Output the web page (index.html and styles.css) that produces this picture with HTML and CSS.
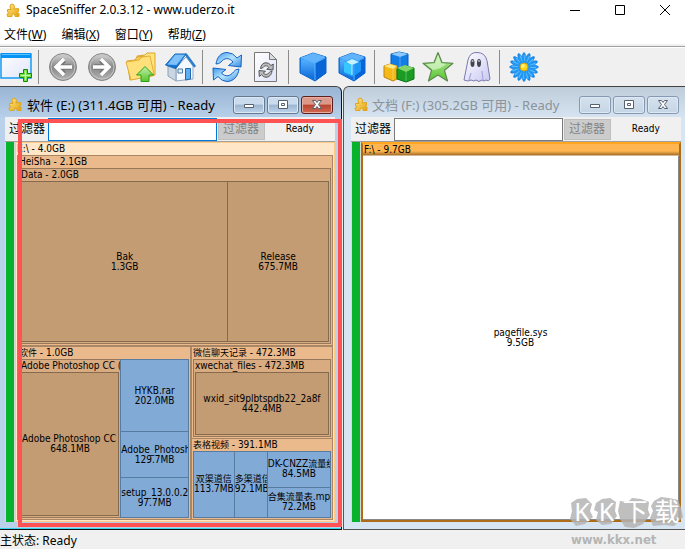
FILE: index.html
```html
<!DOCTYPE html>
<html lang="zh-CN">
<head>
<meta charset="utf-8">
<title>SpaceSniffer 2.0.3.12 - www.uderzo.it</title>
<link rel="stylesheet" href="styles.css">
</head>
<body>
<svg class="defs" aria-hidden="true">
  <defs>
    <linearGradient id="gold" x1="0" y1="0" x2="1" y2="1"><stop offset="0" stop-color="#ffe88a"/><stop offset="1" stop-color="#e5a20c"/></linearGradient>
    <linearGradient id="blue" x1="0" y1="0" x2="0" y2="1"><stop offset="0" stop-color="#58b2ff"/><stop offset="1" stop-color="#0866d6"/></linearGradient>
    <linearGradient id="sky" x1="0" y1="0" x2="1" y2="1"><stop offset="0" stop-color="#3f98ea"/><stop offset=".5" stop-color="#b5e4ff"/><stop offset="1" stop-color="#3289e2"/></linearGradient>
    <linearGradient id="grey" x1="0" y1="0" x2="0" y2="1"><stop offset="0" stop-color="#d6d6d6"/><stop offset=".5" stop-color="#888"/><stop offset="1" stop-color="#b4b4b4"/></linearGradient>
    <linearGradient id="green" x1="0" y1="0" x2="0" y2="1"><stop offset="0" stop-color="#c3efac"/><stop offset="1" stop-color="#57c42d"/></linearGradient>
    <linearGradient id="ghost" x1="0" y1="0" x2="1" y2="1"><stop offset="0" stop-color="#fff"/><stop offset="1" stop-color="#c9c8f2"/></linearGradient>
    <linearGradient id="pane" x1="0" y1="0" x2="1" y2="1"><stop offset="0" stop-color="#fff"/><stop offset="1" stop-color="#dfe4fa"/></linearGradient>
    <symbol id="puzzle" viewBox="0 0 14 15"><path d="M1.500 6.500H5L4 4q0-3 2-3t2.500 2.500L8 6l4.500-.5v3q-2 .5-1.500 2l2-.5v3.500H9q.5-2.500-1.500-2.500T6 13.500H1.500L1 11q2 0 2-1.200T1.500 9z" fill="url(#gold)" stroke="#e0a51c"/></symbol>
    <symbol id="cycle" viewBox="0 0 32 32"><path d="M5 13C6 6 10 1.500 16 1.500q6 0 10 5.500l4.500-3L30 16l-12.500-1.500L22 11c-4-5-9-4-12 0q-2 2-5 2z"/><path d="M28 18c-1 8-6 12.500-12 12.500q-5 0-9-5L2.500 29 2 17l13 1.500L10.500 22c4 4.500 9 3 12-1q2-3 5.500-3z"/></symbol>
    <symbol id="cube" viewBox="0 0 32 32"><path d="M16 2 29 6v16L18 30 3 22V7z" fill="#1680ef" stroke="#0b64c8"/><path d="M16 2 29 6 18 12 3 7z" fill="#61b4fc"/><path d="m18 12 11-6v16l-11 8z" fill="#0964d6"/><path d="m4 8 14 4v17L4 22z" fill="url(#blue)"/><path d="M4 7l14 5 10-5M18 12v17" fill="none" stroke="#5ab3ff"/></symbol>
    <ellipse id="petal" cx="16" cy="16" rx="2.800" ry="14.500"/>
  </defs>
</svg>
<div class="app">
  <header class="titlebar">
    <svg class="logo"><use href="#puzzle"/></svg>
    <h1>SpaceSniffer 2.0.3.12 - www.uderzo.it</h1>
    <div class="sysbuttons">
      <button aria-label="最小化"><svg viewBox="0 0 10 10"><path d="M0 5.500h10"/></svg></button>
      <button aria-label="最大化"><svg viewBox="0 0 10 10"><path d="M.5.5h9v9h-9z"/></svg></button>
      <button aria-label="关闭"><svg viewBox="0 0 10 10"><path d="m0 0 10 10M10 0 0 10"/></svg></button>
    </div>
  </header>
  <nav class="menubar">
    <button>文件(<u>W</u>)</button><button>编辑(<u>X</u>)</button><button>窗口(<u>Y</u>)</button><button>帮助(<u>Z</u>)</button>
  </nav>
  <div class="toolbar">
    <button class="first" aria-label="新建"><svg viewBox="0 0 32 32"><path d="M1 3h30v24H1z" fill="url(#pane)" stroke="#169af4" stroke-width="1.500"/><path d="M1 2h30v5H1z" fill="#0793f5"/><path d="M2 3.500h28" stroke="#58c4ff"/><path d="M23.500 18.500h4v4h4v4h-4v4h-4v-4h-4v-4h4z" fill="#75df50" stroke="#168a08"/><path d="M25.500 20v9M21 24.500h9" stroke="#c0ffa0"/></svg></button>
    <i class="sep"></i>
    <button aria-label="后退"><svg viewBox="0 0 32 32"><circle cx="16" cy="16" r="13.500" fill="url(#grey)" stroke="#858585"/><circle cx="16" cy="16" r="12" fill="none" stroke="#c5c5c5"/><path d="M24 16H10m7-7-7 7 7 7" fill="none" stroke="#777" stroke-width="5.500"/><path d="M25 16H9m8-8-8 8 8 8" fill="none" stroke="#fff" stroke-width="3.500"/></svg></button>
    <button aria-label="前进"><svg viewBox="0 0 32 32"><circle cx="16" cy="16" r="13.500" fill="url(#grey)" stroke="#858585"/><circle cx="16" cy="16" r="12" fill="none" stroke="#c5c5c5"/><path d="M8 16h14m-7-7 7 7-7 7" fill="none" stroke="#777" stroke-width="5.500"/><path d="M7 16h16m-8-8 8 8-8 8" fill="none" stroke="#fff" stroke-width="3.500"/></svg></button>
    <button aria-label="上一级"><svg viewBox="0 0 32 32"><path d="m12 5 8-1 2-2h8v22l-13 4z" fill="#ffe47e" stroke="#dda52a"/><path d="m2 10 8-1 2-3 7-1v21L5 29z" fill="url(#gold)" stroke="#d7a02b"/><path d="m1 11 13-2 3-3 8-1 4 18-3 2-20 4z" fill="#ffe07a" stroke="#e3ae36"/><path d="M20 15.500 28.500 24H24v6.500h-8V24h-4.500z" fill="url(#green)" stroke="#2ca111"/></svg></button>
    <button aria-label="主页"><svg viewBox="0 0 32 32"><path d="m12 17 10-11 7 9v13l-17 2z" fill="#f4f9ff" stroke="#8fa8c2"/><path d="m4 15 8 3v12l-8-5z" fill="#c9d6e3" stroke="#8fa2b5"/><path d="M22 3.500 30.500 15" stroke="#2b7fce" stroke-width="2.500" stroke-linecap="round"/><path d="M1.500 14 11 3h11L12 17.500z" fill="url(#blue)" stroke="#1469b2" stroke-linejoin="round"/><path d="M3.500 13.500 11.500 4H20l-7.500 10z" fill="#7fc2fa"/><path d="M21.500 17.500h5V28l-5 1z" fill="#5aaef6" stroke="#2569aa"/><path d="M14 18h4.500v4H14z" fill="#d4f2ff" stroke="#517a9d"/></svg></button>
    <i class="sep"></i>
    <button aria-label="刷新"><svg viewBox="0 0 32 32"><use href="#cycle" class="cycle-blue"/></svg></button>
    <button aria-label="刷新页面"><svg viewBox="0 0 32 32"><path d="M4.500 1.500h15l7 7v22h-22z" fill="url(#pane)" stroke="#777"/><path d="M19.500 1.500v7h7z" fill="#ddd" stroke="#777"/><use href="#cycle" x="8" y="11" width="16" height="16" class="cycle-grey"/></svg></button>
    <i class="sep"></i>
    <button aria-label="立方体"><svg><use href="#cube"/></svg></button>
    <button aria-label="透明立方体"><svg viewBox="0 0 32 32"><use href="#cube"/><path d="m16 7 9 4v9l-8 6-9-4V11z" fill="#23a4ff" opacity=".8"/><path d="m8 11 8 3v10l-8-3z" fill="#36c7ff"/><path d="m16 8 7 3-7 3-6-3z" fill="#c5f2ff"/><path d="M16 14v10" stroke="#b4efff"/></svg></button>
    <i class="sep"></i>
    <button aria-label="文件类型"><svg viewBox="0 0 32 32"><path d="m8 3 8-2 9 2v12l-8 3-9-3z" fill="#127ce7" stroke="#075bbb"/><path d="m8 3 8-2 9 2-8 3z" fill="#8fcaff"/><path d="m1 15 6-2 7 2v13l-4 2-9-4z" fill="#f5b817" stroke="#bd8510"/><path d="m1 15 6-2 7 2-4 3z" fill="#ffe987"/><path d="m14 18 8-3 9 2v11l-8 3-9-3z" fill="#1b9d25" stroke="#087411"/><path d="m14 17 8-3 9 3-8 4z" fill="#82d46a"/><path d="M23 21v9M17 6v11M10 18v11" stroke="#fff" opacity=".3"/></svg></button>
    <button aria-label="标记"><svg viewBox="0 0 32 32"><path d="m16 1.500 4 10 11 .8-8.500 7 3 10.700L16 24l-9.500 6 3-10.700-8.500-7 11-.8z" fill="url(#green)" stroke="#5e8850" stroke-width="1.200" stroke-linejoin="round"/><path d="m16 4-3 8.500-9 .8 7 5.700q8-1 13-6l-5-.6z" fill="#e2f8d5" opacity=".65"/></svg></button>
    <button aria-label="幽灵"><svg viewBox="0 0 32 32"><path d="M3 29 7 9Q9 1 16 1.500q8 0 10 8L29 28q-1 3-4 1-2 2-4 0-3 3-6 0-2 2-5 0-3 2-7 0z" fill="url(#ghost)" stroke="#7b78ad"/><path d="M10 22 8 29M21 20l1 9" stroke="#aaa7de" stroke-width="1.200"/><ellipse cx="11.500" cy="12" rx="2" ry="4" fill="#45444d"/><ellipse cx="18" cy="12" rx="2" ry="4" fill="#45444d"/><circle cx="11.500" cy="10" r="1" fill="#bbb"/><circle cx="18" cy="10" r="1" fill="#bbb"/></svg></button>
    <i class="sep"></i>
    <button aria-label="关于"><svg viewBox="0 0 32 32"><g fill="#1e97f5" stroke="#0b74d8" stroke-width=".6"><use href="#petal"/><use href="#petal" transform="rotate(22.500 16 16)"/><use href="#petal" transform="rotate(45 16 16)"/><use href="#petal" transform="rotate(67.500 16 16)"/><use href="#petal" transform="rotate(90 16 16)"/><use href="#petal" transform="rotate(112.500 16 16)"/><use href="#petal" transform="rotate(135 16 16)"/><use href="#petal" transform="rotate(157.500 16 16)"/></g><circle cx="16" cy="16" r="11" fill="#2397f2"/><circle cx="16" cy="16" r="9" fill="none" stroke="#5bbcff" stroke-width="6" stroke-dasharray="1 2.530"/><circle cx="16" cy="16" r="4" fill="#ffd414" stroke="#c7a022"/><circle cx="15" cy="15" r="2" fill="#fff06c"/></svg></button>
  </div>

  <main class="workspace">
    <section class="window active">
      <header class="caption">
        <svg class="logo"><use href="#puzzle"/></svg>
        <h2>软件 (E:) (311.4GB 可用) - Ready</h2>
        <div class="controls">
          <button aria-label="最小化"><svg viewBox="0 0 12 12"><path d="M1.500 5.500h9v3h-9z"/></svg></button>
          <button aria-label="还原"><svg viewBox="0 0 12 12"><path d="M1.500 1.500h9v8h-9zM4.500 4.500h3v2h-3z"/></svg></button>
          <button class="close" aria-label="关闭"><svg viewBox="0 0 12 12"><path d="M1.500 1.500h3L6 3.500l1.500-2h3l-3 4 3 4h-3L6 7.500l-1.500 2h-3l3-4z"/></svg></button>
        </div>
      </header>
      <form class="filter">
        <label for="filter-e">过滤器</label><input id="filter-e" type="text"><button type="button" disabled>过滤器</button><output>Ready</output>
      </form>
      <div class="view">
        <div class="gauge"></div>
        <div class="node root">
          <div class="name">E:\ - 4.0GB</div>
          <div class="rows root-body">
            <div class="node level1 heisha">
              <div class="name">HeiSha - 2.1GB</div>
              <div class="node level2 fill inset">
                <div class="name">Data - 2.0GB</div>
                <div class="cols fill inset">
                  <div class="tile dir bak"><div>Bak</div><div>1.3GB</div></div>
                  <div class="tile dir release"><div>Release</div><div>675.7MB</div></div>
                </div>
              </div>
            </div>
            <div class="cols lower">
              <div class="node level1 software">
                <div class="name"><span class="han">软件</span> - 1.0GB</div>
                <div class="cols fill inset">
                  <div class="node level2 adobe">
                    <div class="name">Adobe Photoshop CC (6</div>
                    <div class="rows fill inset"><div class="tile dir fill"><div>Adobe Photoshop CC (</div><div>648.1MB</div></div></div>
                  </div>
                  <div class="rows files">
                    <div class="tile file hykb"><div>HYKB.rar</div><div>202.0MB</div></div>
                    <div class="tile file photo"><div>Adobe_Photosh</div><div>129.7MB</div></div>
                    <div class="tile file setup"><div>setup_13.0.0.20</div><div>97.7MB</div></div>
                  </div>
                </div>
              </div>
              <div class="rows right">
                <div class="node level1 chat">
                  <div class="name"><span class="han">微信聊天记录</span> - 472.3MB</div>
                  <div class="node level2 fill inset">
                    <div class="name">xwechat_files - 472.3MB</div>
                    <div class="rows fill inset"><div class="tile dir fill"><div>wxid_sit9plbtspdb22_2a8f</div><div>442.4MB</div></div></div>
                  </div>
                </div>
                <div class="node level1 video">
                  <div class="name"><span class="han">表格视频</span> - 391.1MB</div>
                  <div class="cols fill inset">
                    <div class="tile file dual"><div class="han">双渠道信</div><div>113.7MB</div></div>
                    <div class="tile file multi"><div class="han">多渠道信</div><div>92.1MB</div></div>
                    <div class="rows flow">
                      <div class="tile file dk"><div>DK-CNZZ<span class="han">流量统</span></div><div>84.5MB</div></div>
                      <div class="tile file total"><div><span class="han">合集流量表</span>.mp4</div><div>72.2MB</div></div>
                    </div>
                  </div>
                </div>
              </div>
            </div>
          </div>
        </div>
      </div>
      <div class="marker"></div>
    </section>

    <section class="window inactive">
      <header class="caption">
        <svg class="logo"><use href="#puzzle"/></svg>
        <h2>文档 (F:) (305.2GB 可用) - Ready</h2>
        <div class="controls">
          <button aria-label="最小化"><svg viewBox="0 0 12 12"><path d="M1.500 5.500h9v3h-9z"/></svg></button>
          <button aria-label="还原"><svg viewBox="0 0 12 12"><path d="M1.500 1.500h9v8h-9zM4.500 4.500h3v2h-3z"/></svg></button>
          <button aria-label="关闭"><svg viewBox="0 0 12 12"><path d="M1.500 1.500h3L6 3.500l1.500-2h3l-3 4 3 4h-3L6 7.500l-1.500 2h-3l3-4z"/></svg></button>
        </div>
      </header>
      <form class="filter">
        <label for="filter-f">过滤器</label><input id="filter-f" type="text"><button type="button" disabled>过滤器</button><output>Ready</output>
      </form>
      <div class="view">
        <div class="gauge"></div>
        <div class="node drive">
          <div class="name">F:\ - 9.7GB</div>
          <div class="tile page fill"><div>pagefile.sys</div><div>9.5GB</div></div>
        </div>
      </div>
    </section>
  </main>
  <footer class="status">主状态: Ready</footer>
  <div class="watermark">
    <div class="brand">
      <svg viewBox="0 0 116 32" preserveAspectRatio="none"><path d="m3 7 6-4 9-1 6 6-2 7 3 6-8 7-9 2-6-7 2-8zM28 7l6-4 8-1 6 4-1 9 2 5-6 8-9 1-6-5 2-8-4-2zM52 5l8 1 4-4 9 1 8 3-1 8 2 5-7 9-9 4-9-1-5-8-2-8zM86 5l7-4 8 1 9 2 3 8 2 9-4 4-5 5-10-1-11 1-3-8 3-7-2-5z"/></svg>
      <strong><span>K</span><span>K</span><span>下</span><span>载</span></strong>
    </div>
    <span class="site">www.kkx.net</span>
  </div>
</div>
</body>
</html>
```
FILE: styles.css
```css
* { box-sizing: border-box; }
body { margin: 0; background: #f0f0f0; color: #000; font: 12px/18px "Noto Sans", "Noto Sans CJK SC", sans-serif; }
button { margin: 0; padding: 0; border: 0; background: none; font: inherit; color: inherit; }
h1, h2 { margin: 0; font-size: 12px; font-weight: 400; white-space: nowrap; }
h2 { font-size: 13px; }
.defs { position: absolute; width: 0; height: 0; }
.app { position: relative; display: flex; flex-direction: column; min-height: 100vh; }
.logo { flex: none; width: 14px; height: 15px; }

.titlebar { display: flex; align-items: center; gap: 6px; height: 24px; padding: 0 0 4px 6px; background: #fff; }
.sysbuttons { display: flex; margin-left: auto; }
.sysbuttons button { display: grid; place-items: center; width: 45px; height: 20px; }
.sysbuttons button:last-child { width: 40px; margin-left: 3px; }
.sysbuttons svg { width: 10px; height: 10px; overflow: visible; fill: none; stroke: #000; }
.menubar { display: flex; gap: 15px; height: 22px; padding: 2px 4px 0; border-bottom: 2px solid #f0f0f0; background: #fff; }

.toolbar { display: flex; align-items: center; height: 40px; border-top: 1px solid #a0a0a0; box-shadow: inset 0 1px #fff; }
.toolbar button { display: grid; place-items: center; width: 39px; height: 38px; }
.toolbar .first { width: 35px; place-items: center start; }
.toolbar svg { width: 32px; height: 32px; }
.sep { width: 5px; height: 34px; margin-left: 3px; border-left: 1px solid #8b8b8b; }
.cycle-blue { fill: url(#sky); stroke: #1463c4; }
.cycle-grey { fill: #bbb; stroke: #555; stroke-width: 2; }

.workspace { display: grid; grid-template-columns: 1fr 1fr; gap: 1px; flex: 1; min-height: 442px; background: #f0f0f0; }
.window { position: relative; display: flex; flex-direction: column; min-width: 0; border-top: 1px solid #444; }
.active { padding: 0 6px 7px 5px; border-right: 1px solid #111; border-bottom: 1px solid #111; border-radius: 0 6px 0 0; background: linear-gradient(#98b4d4, #b9d1ea 32px); box-shadow: inset 0 -1px #39d5ef; }
.inactive { padding: 0 4px 7px 7px; border-left: 1px solid #555; border-bottom: 1px solid #555; border-radius: 6px 0 0 0; background: linear-gradient(#bfcddb, #d7e4f2 32px); color: #8b939b; }
.caption { display: flex; align-items: center; gap: 5px; height: 30px; padding: 5px 0 0 3px; }
.inactive .caption { gap: 4px; }
.controls { display: flex; gap: 2px; margin: 0 2px 0 auto; }
.controls button { display: grid; place-items: center; width: 32px; height: 18px; border: 1px solid #66798f; border-radius: 3px; background: linear-gradient(#c9dbed 45%, #9db5cf 50%, #bcd4eb); box-shadow: inset 0 0 0 1px #dce9f5; }
.inactive .controls button { border-color: #8798b2; background: linear-gradient(#d6e1ed, #c5d5e5); }
.controls .close { border-color: #5c2020; background: linear-gradient(#dc9889 45%, #b94330 50%, #cf6b50); box-shadow: inset 0 0 0 1px #e7ad9e; }
.controls svg { width: 12px; height: 12px; fill: #fff; stroke: #56616f; }

.filter { display: flex; align-items: center; height: 25px; margin: 0; border-bottom: 1px solid #a0a0a0; background: #f0f0f0; color: #000; }
.filter label { width: 43px; padding-left: 4px; white-space: nowrap; }
.filter input { flex: 168 1 0; min-width: 0; height: 23px; padding: 0; border: 1px solid #0078d7; background: #fff; }
.inactive .filter input { border-color: #7a7a7a; }
.filter button { flex: none; width: 47px; height: 21px; margin-left: 1px; border: 1px solid #bfbfbf; background: #ccc; color: #838383; line-height: 18px; }
.filter output { flex: 71 1 0; text-align: center; font: 10px/14px "DejaVu Sans Condensed", sans-serif; }

.view { display: flex; flex: 1; gap: 1px; padding-left: 1px; background: #d8d8d8; color: #000; font: 10px/10px "DejaVu Sans Condensed", "Noto Sans CJK SC", sans-serif; }
.gauge { width: 8px; background: #08b22c; }
.rows, .cols { display: flex; min-width: 0; min-height: 0; }
.rows, .node { flex-direction: column; }
.node { display: flex; min-width: 0; min-height: 0; overflow: hidden; }
.name { flex: none; height: 12px; padding-left: 1px; overflow: hidden; line-height: 12px; white-space: nowrap; }
.han { font-size: 9px; }
.fill { flex: 1 1 0; }
.inset { margin: 0 1px 1px; }
.root { flex: 1; border: 1px solid #ffcb89; background: #fee6c6; }
.root-body { flex: 1; margin: 0 1px 1px; }
.level1 { border: 1px solid #a98764; background: #ebba8c; }
.level2 { border: 1px solid #98785a; background: #d8ab80; }
.tile { display: flex; flex-direction: column; justify-content: center; min-width: 0; min-height: 0; overflow: hidden; border: 1px solid #866a4e; text-align: center; white-space: nowrap; }
.dir { background: #c49c74; }
.file { border-color: #587ba0; background: #82aad7; }
.heisha { flex: 190 1 0; }
.lower { flex: 174 1 0; }
.bak { flex: 208 1 0; }
.release { flex: 101 1 0; border-left: 0; }
.software { flex: 173 1 0; }
.right { flex: 143 1 0; }
.adobe { flex: 101 1 0; border-right: 0; }
.files { flex: 69 1 0; }
.hykb { flex: 73 1 0; }
.photo { flex: 47 1 0; border-top: 0; }
.setup { flex: 40 1 0; border-top: 0; }
.chat { flex: 92 1 0; }
.video { flex: 82 1 0; border-top: 0; }
.dual { flex: 41 1 0; }
.multi { flex: 33 1 0; border-left: 0; }
.flow { flex: 65 1 0; }
.dk { flex: 37 1 0; border-left: 0; }
.total { flex: 31 1 0; border-width: 0 1px 1px 0; }
.drive { flex: 1; border: 2px solid #ad6d18; border-top-color: #ffa51e; background: linear-gradient(#ffb650 7px, #a97029 11px, #fff 12px); }
.page { border: 0; border-right: 1px solid #888; border-bottom: 1px solid #888; background: #fff; }
.marker { position: absolute; inset: 32px -1px 2px 18px; border: 4px solid #ff5353; pointer-events: none; }

.status { height: 19px; padding-top: 2px; background: #f0f0f0; }
.watermark { position: absolute; right: 1px; bottom: 0; width: 116px; pointer-events: none; }
.brand { position: relative; height: 34px; }
.brand svg { display: block; width: 116px; height: 32px; fill: #b4b4b4; opacity: .85; }
.brand strong { position: absolute; inset: 0; display: grid; grid-template-columns: 24px 25px 32px 32px; padding-left: 2px; color: #fff; text-align: center; font: 400 25px/30px "Noto Sans", "Noto Sans CJK SC", sans-serif; }
.site { display: block; padding-left: 3px; color: #b5b5b5; font: bold 13px/19px "DejaVu Sans Condensed", sans-serif; }
```
